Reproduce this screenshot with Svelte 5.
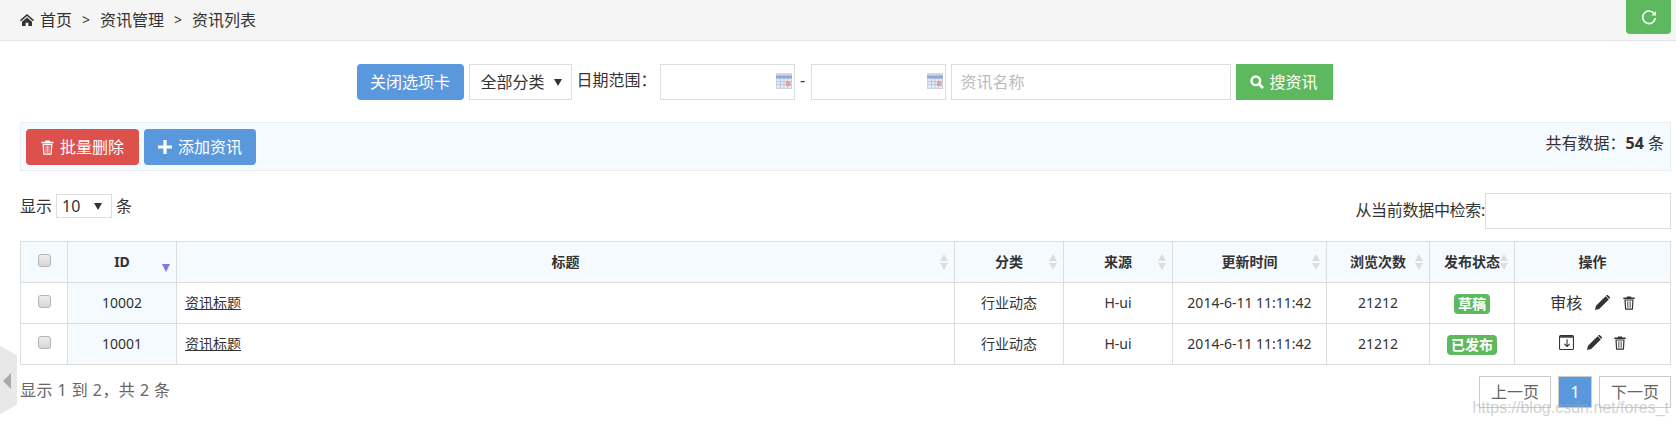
<script>
  const columns = [
    { label: "ID", sort: "active" },
    { label: "标题", sort: "both" },
    { label: "分类", sort: "both" },
    { label: "来源", sort: "both" },
    { label: "更新时间", sort: "both" },
    { label: "浏览次数", sort: "both" },
    { label: "发布状态", sort: "both" },
    { label: "操作", sort: "" },
  ];

  const rows = [
    { id: 10002, status: "草稿", review: true },
    { id: 10001, status: "已发布", review: false },
  ];
</script>

{#snippet trash()}
  <svg class="ico trash" viewBox="0 0 12 14" aria-hidden="true">
    <path d="M3.800 1.600V.5h4.400v1.100h3.500v1.500H.3V1.600z" fill="currentColor" />
    <path d="M1.400 3.600h9.200l-.6 9.300c0 .5-.4.9-.9.9H2.900c-.5 0-.9-.4-.9-.9zm1.300 1 .4 7.900h5.800l.4-7.900z" fill="currentColor" />
    <path d="M4.200 5.200h.8v6.600h-.8zM5.600 5.200h.8v6.600h-.8zM7 5.200h.8v6.600H7z" fill="currentColor" opacity=".75" />
  </svg>
{/snippet}

{#snippet pencil()}
  <svg class="ico pencil" viewBox="0 0 15 15" aria-hidden="true">
    <path d="M0 15l1-4.200L10.600 1.200l3.200 3.200L4.200 14zM11.400.4c.5-.5 1.300-.5 1.800 0l1.400 1.400c.5.5.5 1.300 0 1.800l-.3.3-3.200-3.200z" fill="currentColor" />
  </svg>
{/snippet}

{#snippet calendar()}
  <svg class="calendar" viewBox="0 0 16 16" aria-hidden="true">
    <rect width="16" height="16" fill="#c9d3e4" />
    <rect width="16" height="2.500" fill="#d6d6d6" />
    <rect y="2.500" width="16" height="3" fill="#8fa9dd" />
    <path d="M1 6h14v9H1z" fill="#e6ebf3" />
    <path d="M1 8.500h14M1 11.500h14M4.500 6v9M8 6v9M11.500 6v9" stroke="#bcc8dc" stroke-width="1" />
    <rect x="10" y="8" width="4.500" height="5" fill="#eda08f" />
  </svg>
{/snippet}

<div class="page">
  <nav class="crumbs">
    <svg class="home" viewBox="0 0 14 12" aria-hidden="true">
      <path d="M7 0 14 6.100l-1 1.100L7 2 1 7.200 0 6.100zM2 7.700 7 3.400l5 4.300V12H8.400V8.700H5.600V12H2z" fill="currentColor" />
    </svg>
    <span>首页</span>
    <span class="sep">&gt;</span>
    <span>资讯管理</span>
    <span class="sep">&gt;</span>
    <span>资讯列表</span>
    <button class="refresh" aria-label="刷新">
      <svg viewBox="0 0 16 16" aria-hidden="true">
        <path d="M13.300 4.800A6.300 6.300 0 1 0 14.300 9" fill="none" stroke="currentColor" stroke-width="1.700" />
        <path d="M15 2v4.600h-4.600z" fill="currentColor" />
      </svg>
    </button>
  </nav>

  <main class="content">
    <div class="filters">
      <button class="btn blue close">关闭选项卡</button>
      <div class="select-box category">
        <select><option>全部分类</option></select>
      </div>
      <span class="date-label">日期范围：</span>
      <div class="date-field"><input type="text" />{@render calendar()}</div>
      <span class="dash">-</span>
      <div class="date-field"><input type="text" />{@render calendar()}</div>
      <input class="name-input" type="text" placeholder="资讯名称" />
      <button class="btn green search">
        <svg class="ico" viewBox="0 0 14 14" aria-hidden="true">
          <circle cx="5.800" cy="5.800" r="4.300" fill="none" stroke="currentColor" stroke-width="2.400" />
          <path d="M8.800 8.800 13 13" stroke="currentColor" stroke-width="2.800" />
        </svg>
        搜资讯
      </button>
    </div>

    <div class="bar">
      <div class="bar-actions">
        <button class="btn red">
          {@render trash()}
          批量删除
        </button>
        <button class="btn blue">
          <svg class="ico plus" viewBox="0 0 13 13" aria-hidden="true">
            <path d="M5 0h3v5h5v3H8v5H5V8H0V5h5z" fill="currentColor" />
          </svg>
          添加资讯
        </button>
      </div>
      <span class="total">共有数据：<strong>54</strong> 条</span>
    </div>

    <div class="table-controls">
      <label class="length">
        显示
        <span class="select-box small"><select><option>10</option></select></span>
        条
      </label>
      <label class="lookup"><span>从当前数据中检索:</span><input type="text" /></label>
    </div>

    <table>
      <colgroup>
        <col style="width: 47px" />
        <col style="width: 109px" />
        <col />
        <col style="width: 109px" />
        <col style="width: 109px" />
        <col style="width: 154px" />
        <col style="width: 103px" />
        <col style="width: 85px" />
        <col style="width: 156px" />
      </colgroup>
      <thead>
        <tr>
          <th><input type="checkbox" /></th>
          {#each columns as col}
            <th class={col.sort ? "sortable " + col.sort : ""}>{col.label}</th>
          {/each}
        </tr>
      </thead>
      <tbody>
        {#each rows as row}
          <tr>
            <td><input type="checkbox" /></td>
            <td class="id-cell">{row.id}</td>
            <td class="title-cell"><a href="#top">资讯标题</a></td>
            <td>行业动态</td>
            <td>H-ui</td>
            <td>2014-6-11 11:11:42</td>
            <td>21212</td>
            <td><span class="badge">{row.status}</span></td>
            <td class="ops">
              {#if row.review}
                <span class="review">审核</span>
              {:else}
                <svg class="ico box" viewBox="0 0 14 14" aria-hidden="true">
                  <path d="M1.500.500h11a1 1 0 0 1 1 1v11a1 1 0 0 1-1 1h-11a1 1 0 0 1-1-1v-11a1 1 0 0 1 1-1z" fill="none" stroke="currentColor" />
                  <path d="M1 1h12v1.500H1z" fill="currentColor" />
                  <path d="M7.500 4v6.500M5 8.200l2.500 2.500L10 8.200" fill="none" stroke="currentColor" />
                </svg>
              {/if}
              {@render pencil()}
              {@render trash()}
            </td>
          </tr>
        {/each}
      </tbody>
    </table>

    <div class="table-foot">
      <span class="info">显示 1 到 2，共 2 条</span>
      <div class="pager">
        <button>上一页</button>
        <button class="current">1</button>
        <button>下一页</button>
      </div>
    </div>
  </main>

  <div class="side-tab"><i></i></div>
  <div class="watermark">https://blog.csdn.net/fores_t</div>
</div>

<style>
  :global(body) {
    margin: 0;
    background: #fff;
  }

  .page {
    position: relative;
    height: 426px;
    overflow: hidden;
    font-family: "Noto Sans", "Noto Sans CJK SC", sans-serif;
    font-size: 16px;
    line-height: 20px;
    color: #333;
  }

  .crumbs {
    display: flex;
    align-items: center;
    height: 40px;
    padding-left: 20px;
    padding-right: 5px;
    background: #f5f5f5;
    border-bottom: 1px solid #e2e2e2;
  }

  .home {
    width: 14px;
    height: 12px;
    margin-right: 6px;
  }

  .sep {
    margin: 0 10px;
    font-size: 14px;
  }

  .refresh {
    display: flex;
    align-items: center;
    justify-content: center;
    width: 45px;
    height: 34px;
    margin: 0 0 6px auto;
    padding: 0;
    border: 0;
    border-radius: 0 0 4px 4px;
    background: #5eb95e;
    color: #f0faf0;
  }

  .refresh svg {
    width: 16px;
    height: 16px;
  }

  .content {
    padding: 0 5px 0 20px;
  }

  .filters {
    display: flex;
    align-items: flex-start;
    justify-content: center;
    margin-top: 23px;
    margin-right: 2px;
    height: 36px;
  }

  .btn {
    display: inline-flex;
    align-items: center;
    justify-content: center;
    gap: 5px;
    height: 36px;
    padding: 0;
    border: 0;
    border-radius: 4px;
    font: inherit;
    color: #fff;
  }

  .blue {
    background: #5a98de;
  }

  .red {
    background: #dd514c;
  }

  .green {
    background: #5eb95e;
  }

  .close {
    width: 107px;
  }

  .search {
    width: 97px;
    margin-left: 5px;
    border-radius: 0;
  }

  .select-box {
    position: relative;
    display: inline-block;
    box-sizing: border-box;
    border: 1px solid #ddd;
    background: #fff;
  }

  .select-box::after {
    content: "";
    position: absolute;
    top: 50%;
    right: 9px;
    margin-top: -3px;
    border: 4px solid transparent;
    border-top: 7px solid #333;
    border-bottom: 0;
    pointer-events: none;
  }

  .select-box select {
    display: block;
    width: 100%;
    height: 100%;
    padding: 0 0 0 11px;
    border: 0;
    background: transparent;
    font: inherit;
    color: inherit;
    appearance: none;
  }

  .category {
    width: 103px;
    height: 36px;
    margin-left: 5px;
  }

  .small {
    width: 56px;
    height: 24px;
    margin: 0 4px;
  }

  .small select {
    padding-left: 5px;
  }

  .date-label {
    margin-left: 5px;
    width: 83px;
    line-height: 32px;
  }

  .date-field {
    position: relative;
    width: 135px;
    height: 36px;
  }

  .calendar {
    position: absolute;
    top: 9px;
    right: 3px;
    width: 16px;
    height: 16px;
    filter: blur(0.3px);
  }

  input[type="text"] {
    display: block;
    box-sizing: border-box;
    height: 36px;
    padding: 0 9px;
    border: 1px solid #ddd;
    background: #fff;
    font: inherit;
    color: inherit;
  }

  input::placeholder {
    color: #bbb;
  }

  .date-field input {
    width: 100%;
  }

  .dash {
    width: 16px;
    line-height: 32px;
    text-align: center;
  }

  .name-input {
    width: 280px;
    margin-left: 5px;
  }

  .ico {
    flex: none;
    width: 14px;
    height: 14px;
  }

  .trash {
    width: 12px;
    height: 14px;
  }

  .bar {
    display: flex;
    align-items: flex-start;
    justify-content: space-between;
    box-sizing: border-box;
    height: 49px;
    margin-top: 22px;
    padding: 6px 6px 0 5px;
    background: #f5fafe;
    border: 1px solid #eaeef2;
  }

  .bar-actions {
    display: flex;
    gap: 5px;
  }

  .bar-actions .btn {
    width: 113px;
    gap: 6px;
  }

  .bar-actions .trash {
    width: 13px;
    height: 15px;
  }

  .bar-actions .blue {
    width: 112px;
  }

  .total {
    padding-top: 4px;
  }

  .total strong {
    font-weight: 700;
  }

  .table-controls {
    display: flex;
    align-items: flex-start;
    justify-content: space-between;
    height: 36px;
    margin-top: 22px;
  }

  .length {
    display: flex;
    align-items: center;
    height: 24px;
    margin-top: 1px;
  }

  .lookup {
    display: flex;
    align-items: center;
    height: 36px;
  }

  .lookup span {
    padding-bottom: 2px;
    letter-spacing: -0.3px;
  }

  .lookup input {
    width: 186px;
  }

  table {
    width: 100%;
    margin-top: 12px;
    border-collapse: collapse;
    table-layout: fixed;
    font-size: 14px;
  }

  th,
  td {
    height: 41px;
    padding: 0 8px;
    border: 1px solid #ddd;
    box-sizing: border-box;
    text-align: center;
    white-space: nowrap;
  }

  th {
    position: relative;
    background: #f5fafe;
    font-weight: 700;
  }

  .sortable::before,
  .sortable::after {
    content: "";
    position: absolute;
    right: 6px;
    border-left: 4.500px solid transparent;
    border-right: 4.500px solid transparent;
  }

  .sortable::before {
    top: 12px;
    border-bottom: 7px solid #ddd;
  }

  .sortable::after {
    top: 21px;
    border-top: 7px solid #ddd;
  }

  .active::before {
    display: none;
  }

  .active::after {
    top: 22px;
    border-left-width: 4px;
    border-right-width: 4px;
    border-top: 8px solid #7b7be0;
  }

  input[type="checkbox"] {
    display: block;
    width: 13px;
    height: 13px;
    margin: -4px auto 0;
    border: 1px solid #b5b5b5;
    border-radius: 3px;
    background: linear-gradient(#ededed, #d6d6d6);
    appearance: none;
  }

  .id-cell {
    background: #f5fafe;
  }

  .title-cell {
    text-align: left;
  }

  .title-cell a {
    color: inherit;
  }

  .badge {
    display: inline-block;
    height: 20px;
    padding: 0 4px;
    border-radius: 4px;
    background: #5eb95e;
    color: #fff;
    font-weight: 700;
    line-height: 20px;
    vertical-align: -2px;
  }

  .ops {
    color: #333;
  }

  .ops .ico {
    display: inline-block;
    vertical-align: -1px;
  }

  .ops .box {
    width: 15px;
    height: 15px;
  }

  .ops .pencil {
    width: 15px;
    height: 15px;
    margin: 0 9px;
  }

  .review {
    font-size: 16px;
  }

  .table-foot {
    display: flex;
    justify-content: space-between;
    align-items: flex-start;
    margin-top: 11px;
  }

  .info {
    margin-top: 4px;
    color: #666;
    letter-spacing: 0.45px;
  }

  .pager {
    display: flex;
    gap: 7px;
  }

  .pager button {
    width: 72px;
    height: 32px;
    padding: 0;
    border: 1px solid #ccc;
    background: #fff;
    font: inherit;
    color: #666;
  }

  .pager .current {
    width: 34px;
    background: #5a98de;
    color: #fff;
  }

  .side-tab {
    position: absolute;
    left: 0;
    top: 346px;
    width: 17px;
    height: 68px;
    background: #e8e8e8;
    clip-path: polygon(0 0, 100% 14%, 100% 86%, 0 100%);
  }

  .side-tab i {
    position: absolute;
    top: 27px;
    left: 3px;
    border: 8px solid transparent;
    border-left: 0;
    border-right: 8px solid #aaa;
  }

  .watermark {
    position: absolute;
    right: 7px;
    top: 398px;
    font-family: "Liberation Sans", sans-serif;
    font-size: 16px;
    color: rgba(170, 170, 170, 0.55);
    pointer-events: none;
  }
</style>
